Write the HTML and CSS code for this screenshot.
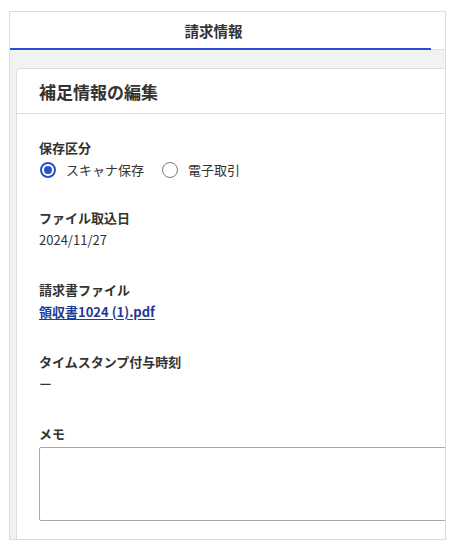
FILE: index.html
```html
<!DOCTYPE html>
<html lang="ja">
<head>
<meta charset="utf-8">
<title>請求情報</title>
<link rel="stylesheet" href="styles.css">
</head>
<body>
<div class="frame">
  <div class="tabs">
    <div class="tab">請求情報</div>
  </div>
  <div class="content">
    <section class="card">
      <header class="card-header"><h2>補足情報の編集</h2></header>
      <div class="card-body">
        <div class="field first">
          <div class="label">保存区分</div>
          <div class="radios">
            <label class="radio"><span class="circle checked"></span>スキャナ保存</label>
            <label class="radio"><span class="circle"></span>電子取引</label>
          </div>
        </div>
        <div class="field">
          <div class="label">ファイル取込日</div>
          <div class="value">2024/11/27</div>
        </div>
        <div class="field">
          <div class="label">請求書ファイル</div>
          <div class="value"><a class="link" href="#">領収書1024 (1).pdf</a></div>
        </div>
        <div class="field">
          <div class="label">タイムスタンプ付与時刻</div>
          <div class="value">ー</div>
        </div>
        <div class="field memo">
          <div class="label">メモ</div>
          <div class="textarea"></div>
        </div>
      </div>
    </section>
  </div>
</div>
</body>
</html>
```
FILE: styles.css
```css
* { box-sizing: border-box; }
html, body { margin: 0; padding: 0; background: #fff; }
body {
  font-family: "Noto Sans CJK JP", "Noto Sans", sans-serif;
  color: #333;
}
.frame {
  margin: 11px 0 0 9px;
  width: 437px;
  height: 529px;
  border: 1px solid #dcdcdc;
  overflow: hidden;
  display: flex;
  flex-direction: column;
}
.tabs {
  display: flex;
  height: 38px;
  border-bottom: 1px solid #e2e2e2;
  flex: none;
}
.tab {
  width: 421px;
  height: 38px;
  margin-bottom: -1px;
  border-bottom: 2px solid #2c4fd2;
  display: flex;
  align-items: center;
  justify-content: center;
  padding-right: 14px;
  font-size: 14.5px;
  font-weight: 700;
  color: #333;
}
.content {
  flex: 1;
  background: #f2f2f2;
  padding: 18px 0 0 6px;
  overflow: hidden;
}
.card {
  width: 460px;
  height: 600px;
  background: #fff;
  border: 1px solid #dcdcdc;
  border-radius: 4px 0 0 0;
}
.card-header {
  height: 45px;
  border-bottom: 1px solid #dedede;
  display: flex;
  align-items: center;
  padding-left: 22px;
}
.card-header h2 {
  margin: 0;
  font-size: 17px;
  font-weight: 700;
  color: #333;
}
.card-body {
  padding: 23px 22px 0 22px;
}
.field { margin-bottom: 28px; }
.field.first { margin-bottom: 26px; }
.label {
  font-size: 13px;
  font-weight: 700;
  line-height: 22px;
  color: #333;
}
.value {
  font-size: 13px;
  line-height: 22px;
  color: #333;
}
.radios {
  display: flex;
  align-items: center;
  height: 22px;
  gap: 17px;
}
.radio {
  display: flex;
  align-items: center;
  gap: 10px;
  font-size: 13px;
  color: #333;
  line-height: 22px;
}
.circle {
  width: 16px;
  height: 16px;
  border-radius: 50%;
  border: 1.5px solid #777;
  display: inline-flex;
  align-items: center;
  justify-content: center;
  margin-left: 1px;
}
.circle.checked { border: 2px solid #2a4fc6; }
.circle.checked::after {
  content: "";
  width: 8px;
  height: 8px;
  border-radius: 50%;
  background: #2a4fc6;
}
.link {
  color: #1f3b96;
  font-weight: 600;
  text-decoration: underline;
  text-underline-offset: 2px;
}
.memo .textarea {
  margin-top: 2px;
  width: 420px;
  height: 74px;
  border: 1px solid #a8a8a8;
  border-radius: 2px;
  background: #fff;
}
```
